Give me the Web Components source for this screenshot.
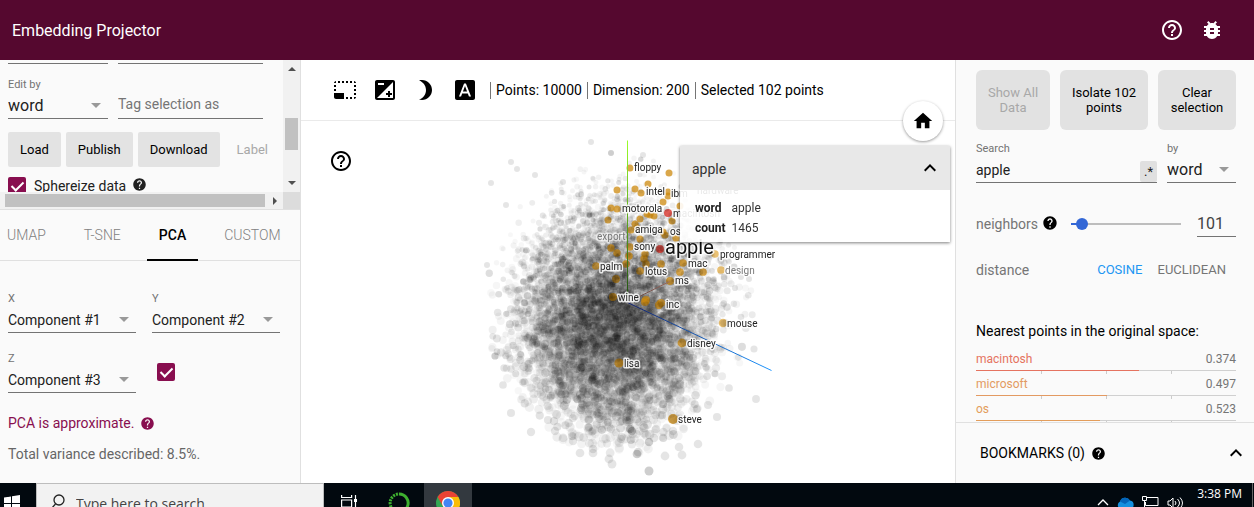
<!DOCTYPE html>
<html lang="en">
<head>
<meta charset="utf-8">
<title>Embedding Projector</title>
<style>
  html, body { margin: 0; height: 100%; }
  body { font-family: Roboto, "Liberation Sans", sans-serif; font-size: 14px; color: #212121; background: #fff; overflow: hidden; }
</style>
</head>
<body>
<embedding-app></embedding-app>
<script>
const define = (name, html, init) => {
  const tpl = document.createElement('template');
  tpl.innerHTML = html;
  customElements.define(name, class extends HTMLElement {
    constructor() {
      super();
      this.attachShadow({ mode: 'open' }).append(tpl.content.cloneNode(true));
    }
    connectedCallback() { if (init) init(this, this.shadowRoot); }
  });
};

const ICONS = {
  'help-outline': 'M11 18h2v-2h-2v2zm1-16C6.48 2 2 6.48 2 12s4.48 10 10 10 10-4.48 10-10S17.52 2 12 2zm0 18c-4.41 0-8-3.59-8-8s3.59-8 8-8 8 3.59 8 8-3.59 8-8 8zm0-14c-2.21 0-4 1.79-4 4h2c0-1.1.9-2 2-2s2 .9 2 2c0 2-3 1.75-3 5h2c0-2.25 3-2.5 3-5 0-2.21-1.79-4-4-4z',
  help: 'M12 2C6.48 2 2 6.48 2 12s4.48 10 10 10 10-4.48 10-10S17.52 2 12 2zm1 17h-2v-2h2v2zm2.07-7.75l-.9.92C13.45 12.9 13 13.5 13 15h-2v-.5c0-1.1.45-2.1 1.17-2.83l1.24-1.26c.37-.36.59-.86.59-1.41 0-1.1-.9-2-2-2s-2 .9-2 2H8c0-2.21 1.79-4 4-4s4 1.79 4 4c0 .88-.36 1.68-.93 2.25z',
  bug: 'M20 8h-2.81c-.45-.78-1.07-1.45-1.82-1.96L17 4.41 15.59 3l-2.17 2.17C12.96 5.06 12.49 5 12 5c-.49 0-.96.06-1.41.17L8.41 3 7 4.41l1.62 1.63C7.88 6.55 7.26 7.22 6.81 8H4v2h2.09c-.05.33-.09.66-.09 1v1H4v2h2v1c0 .34.04.67.09 1H4v2h2.81c1.04 1.79 2.97 3 5.19 3s4.15-1.21 5.19-3H20v-2h-2.09c.05-.33.09-.66.09-1v-1h2v-2h-2v-1c0-.34-.04-.67-.09-1H20V8zm-6 8h-4v-2h4v2zm0-4h-4v-2h4v2z',
  home: 'M10 20v-6h4v6h5v-8h3L12 3 2 12h3v8z',
  less: 'M12 8l-6 6 1.41 1.41L12 10.83l4.59 4.58L18 14z',
  exposure: 'M15 17v2h2v-2h2v-2h-2v-2h-2v2h-2v2h2zm5-15H4c-1.1 0-2 .9-2 2v16c0 1.1.9 2 2 2h16c1.1 0 2-.9 2-2V4c0-1.1-.9-2-2-2zM5 5h6v2H5V5zm15 15H4L20 4v16z',
  night: 'M9 2c-1.05 0-2.05.16-3 .46 4.06 1.27 7 5.06 7 9.54 0 4.48-2.94 8.27-7 9.54.95.3 1.95.46 3 .46 5.52 0 10-4.48 10-10S14.52 2 9 2z',
  labels: 'M9.93 13.5h4.14L12 7.98zM20 2H4c-1.1 0-2 .9-2 2v16c0 1.1.9 2 2 2h16c1.1 0 2-.9 2-2V4c0-1.1-.9-2-2-2zm-4.05 16.5l-1.14-3H9.17l-1.12 3H5.96l5.11-13h1.86l5.11 13h-2.09z',
  select: 'M23 15h-2v2h2v-2zm0-4h-2v2h2v-2zm0 8h-2v2c1 0 2-1 2-2zM15 3h-2v2h2V3zm8 4h-2v2h2V7zm-2-4v2h2c0-1-1-2-2-2zM3 21h8v-6H1v4c0 1.1.9 2 2 2zM3 7H1v2h2V7zm12 12h-2v2h2v-2zm4-16h-2v2h2V3zm0 16h-2v2h2v-2zM3 3C2 3 1 4 1 5h2V3zm0 8H1v2h2v-2zm8-8H9v2h2V3zM7 3H5v2h2V3z'
};

define('ep-icon', `
  <style>
    :host { display: inline-block; flex: none; width: 24px; height: 24px; }
    svg { display: block; width: 100%; height: 100%; fill: currentColor; }
  </style>
  <svg viewBox="0 0 24 24" aria-hidden="true"><path></path></svg>`,
  (el, root) => root.querySelector('path').setAttribute('d', ICONS[el.getAttribute('name')]));

define('ep-header', `
  <style>
    :host { display: flex; align-items: center; justify-content: space-between; height: 60px; padding: 0 30px 0 12px; background: #55082f; color: #fff; box-sizing: border-box; flex: none; }
    h1 { margin: 0; font-size: 16px; font-weight: 400; line-height: 60px; padding-top: 1px; }
    nav { display: flex; gap: 16px; }
    button { all: unset; display: block; height: 24px; }
  </style>
  <h1>Embedding Projector</h1>
  <nav>
    <button aria-label="Help"><ep-icon name="help-outline"></ep-icon></button>
    <button aria-label="Report a bug"><ep-icon name="bug"></ep-icon></button>
  </nav>`);

define('ep-select', `
  <style>
    :host { display: block; }
    label { display: block; font-size: 11px; line-height: 16px; color: #737373; min-height: 16px; }
    div { display: flex; align-items: center; height: 25px; border-bottom: 1px solid #737373; }
    select { appearance: none; flex: 1; min-width: 0; height: 24px; border: 0; padding: 0; margin: 0; background: none; font: inherit; color: #212121; outline: 0; }
    i { border: 5px solid transparent; border-top-color: #999; border-bottom: 0; margin-right: 7px; }
  </style>
  <label for="s"></label>
  <div><select id="s"><option></option></select><i></i></div>`,
  (el, root) => {
    root.querySelector('label').textContent = el.getAttribute('label');
    root.querySelector('option').textContent = el.getAttribute('value');
  });

define('ep-check', `
  <style>
    :host { display: inline-flex; align-items: center; color: #212121; }
    label { display: flex; align-items: center; gap: 8px; line-height: 18px; }
    input { appearance: none; margin: 0; width: 18px; height: 18px; border-radius: 2px; background: #880e4f; display: grid; place-items: start center; }
    input::before { content: ""; width: 5px; height: 10px; margin-top: 2px; border: solid #fff; border-width: 0 2px 2px 0; transform: rotate(45deg); }
  </style>
  <label><input type="checkbox" checked><slot></slot></label>`,
  (el, root) => {
    if (el.hasAttribute('label')) root.querySelector('input').setAttribute('aria-label', el.getAttribute('label'));
  });

define('ep-data-panel', `
  <style>
    :host { display: grid; grid-template: 132px 17px / 1fr 17px; background: #fafafa; border-bottom: 1px solid #e0e0e0; flex: none; }
    .view { overflow: hidden; padding: 3px 0 0 8px; }
    .top, .fields { display: grid; grid-template-columns: 100px 145px; gap: 10px; }
    .top span { border-bottom: 1px solid #737373; }
    .fields { margin-top: 13px; align-items: end; }
    .fields ep-select { font-size: 16px; }
    input { height: 28px; box-sizing: border-box; min-width: 0; border: 0; border-bottom: 1px solid #737373; background: none; font: inherit; padding: 0 0 2px; outline: 0; }
    input::placeholder { color: #757575; opacity: 1; }
    .btns { display: flex; gap: 5px; margin-top: 13px; white-space: nowrap; }
    button { height: 35px; padding: 0 12px; border: 0; border-radius: 2px; background: #e3e3e3; color: #000; font: inherit; font-size: 13px; flex: none; }
    button:disabled { background: none; color: #a8a8a8; }
    .opt { display: flex; align-items: start; gap: 6px; margin-top: 10px; }
    .opt ep-icon { width: 15px; height: 15px; color: #212121; }
    .bar { background: #f1f1f1; display: flex; align-items: center; justify-content: space-between; }
    .v { flex-direction: column; padding: 7px 0; }
    .v b { width: 13px; height: 32px; margin-top: 16px; background: #c1c1c1; }
    .h { padding: 0 6px 0 5px; }
    .h b { flex: 1; height: 13px; background: #c1c1c1; margin-right: 8px; }
    .bar i { border: 4px solid transparent; }
    .up { border-top: 0 !important; border-bottom-color: #505050 !important; }
    .down { border-bottom: 0 !important; border-top-color: #505050 !important; }
    .right { border-right: 0 !important; border-left-color: #505050 !important; }
    .corner { background: #dcdcdc; }
  </style>
  <div class="view">
    <div class="top"><span></span><span></span></div>
    <div class="fields">
      <ep-select label="Edit by" value="word"></ep-select>
      <input aria-label="Tag selection as" placeholder="Tag selection as">
    </div>
    <div class="btns"><button>Load</button><button>Publish</button><button>Download</button><button disabled>Label</button></div>
    <div class="opt"><ep-check>Sphereize data</ep-check><ep-icon name="help"></ep-icon></div>
  </div>
  <div class="bar v"><i class="up"></i><b></b><i class="down"></i></div>
  <div class="bar h"><b></b><i class="right"></i></div>
  <div class="corner"></div>`);

define('ep-projections', `
  <style>
    :host { display: block; flex: 1; min-height: 0; overflow: hidden; }
    nav { display: flex; gap: 38px; height: 50px; padding: 0 7px; border-bottom: 1px solid #e0e0e0; }
    button { border: 0; padding: 0; background: none; font: inherit; font-weight: 300; color: #808080; position: relative; height: 50px; }
    button[aria-selected=true] { font-weight: 500; color: #000; }
    button[aria-selected=true]::after { content: ""; position: absolute; left: -12px; right: -12px; bottom: -1px; height: 2px; background: #000; }
    .axes { display: grid; grid-template-columns: 128px 128px; gap: 18px 16px; padding: 30px 8px 0; }
    .axes ep-check { padding: 0 0 0 5px; align-self: center; }
    p { margin: 0; padding: 0 8px; line-height: 20px; color: #666; }
    .note { display: flex; align-items: center; gap: 6px; margin: 20px 0 11px; color: #880e4f; }
    .note ep-icon { width: 15px; height: 15px; }
  </style>
  <nav role="tablist">
    <button role="tab">UMAP</button><button role="tab">T-SNE</button><button role="tab" aria-selected="true">PCA</button><button role="tab">CUSTOM</button>
  </nav>
  <div class="axes">
    <ep-select label="X" value="Component #1"></ep-select>
    <ep-select label="Y" value="Component #2"></ep-select>
    <ep-select label="Z" value="Component #3"></ep-select>
    <ep-check label="Use Z component"></ep-check>
  </div>
  <p class="note">PCA is approximate. <ep-icon name="help"></ep-icon></p>
  <p>Total variance described: 8.5%.</p>`);

define('ep-toolbar', `
  <style>
    :host { display: flex; align-items: center; height: 60px; padding-left: 32px; border-bottom: 1px solid #eaeaea; color: #000; white-space: nowrap; flex: none; }
    button { all: unset; height: 24px; margin-right: 16px; }
    span { border-left: 1px solid #757575; padding: 0 5px; line-height: 17px; }
    span:first-of-type { margin-left: -3px; }
  </style>
  <button aria-label="Select"><ep-icon name="select"></ep-icon></button>
  <button aria-label="Edit"><ep-icon name="exposure"></ep-icon></button>
  <button aria-label="Night mode"><ep-icon name="night"></ep-icon></button>
  <button aria-label="Labels"><ep-icon name="labels"></ep-icon></button>
  <span>Points: 10000</span><span>Dimension: 200</span><span>Selected 102 points</span>`);

/* Coordinates of the scatter plot have their origin at the middle of the stage. */
const MATCHES = [[2,-134],[41,-129],[20,-118],[7,-113],[13,-109],[-11,-112],[40,-110],[35,-100],[-17,-94],[-11,-93],[-20,-82],[19,-88],[26,-86],[44,-81],[12,-83],[7,-78],[3,-72],[35,-70],[12,-63],[-17,-54],[-11,-49],[2,-55],[1,-46],[17,-48],[16,-43],[18,-38],[33,-38],[-32,-36],[-2,-38],[12,-31],[-12,-23],[87,-48],[55,-39],[52,-30],[75,-30],[42,-21],[93,-32],[-15,-5],[17,0],[33,1],[48,-64],[95,21],[54,41],[-9,61],[45,117],[22,-87],[9,-74],[37,-67],[40,-106],[31,3],[18,-2],[52,-96]];
const NEAREST = [[32,-53],[40,-89]];
const OUTLIERS = [[-37,-160],[-17,-149],[-17,-149],[15,-147],[-117,-140],[-111,-133],[-137,-119],[-93,-127],[-65,-120],[-122,-97],[-141,-37],[-133,54],[-133,54],[-125,83],[-117,111],[-97,130],[-73,129],[-56,134],[-80,118],[-48,151],[-35,151],[-19,157],[-16,162],[21,169],[21,169],[21,140],[21,140],[9,152],[9,152],[54,153],[51,145],[70,142],[45,129],[26,136],[37,154],[89,115],[80,103],[128,97],[101,86],[126,47],[-7,137],[-55,139],[-117,67],[-124,66],[113,15],[121,-23],[113,-25],[107,-14],[-35,147],[28,127],[-17,127],[4,129],[4,129],[10,150]];
const WORDS = [['floppy',6,-132],['intel',18,-108],['ibm',43,-106],['hardware',69,-109],['motorola',-6,-91],['macintosh',45,-86],['amiga',7,-70],['os',42,-68],['sony',6,-53],['mac',60,-36],['lotus',17,-28],['palm',-28,-33],['programmer',92,-45],['ms',47,-19],['wine',-10,-2],['inc',38,5],['mouse',99,24],['disney',59,44],['lisa',-4,64],['steve',50,120]];

define('ep-scatter', `
  <style>
    :host { display: grid; flex: 1; min-height: 0; overflow: hidden; place-content: center; }
    canvas, svg { grid-area: 1 / 1; display: block; }
    text { font-size: 10px; fill: #222; stroke: #fff; stroke-width: 3px; stroke-opacity: .85; stroke-linejoin: round; paint-order: stroke; }
    .dim { fill: #777; stroke-opacity: .6; }
    .big { font-size: 20px; fill: #111; }
  </style>
  <canvas width="654" height="362"></canvas>
  <svg width="654" height="362" viewBox="-327 -182 654 362"></svg>`,
  (el, root) => {
    const ctx = root.querySelector('canvas').getContext('2d');
    ctx.translate(327, 181);
    let seed = 20;
    const rnd = () => {
      seed = (seed + 0x6D2B79F5) | 0;
      let t = Math.imul(seed ^ (seed >>> 15), 1 | seed);
      t = (t + Math.imul(t ^ (t >>> 7), 61 | t)) ^ t;
      return ((t ^ (t >>> 14)) >>> 0) / 4294967296;
    };
    const gauss = () => Math.sqrt(-2 * Math.log(1 - rnd())) * Math.cos(6.2832 * rnd());
    const dot = (x, y, r, fill) => { ctx.fillStyle = fill; ctx.beginPath(); ctx.arc(x, y, r, 0, 7); ctx.fill(); };
    const axis = (x, y, from, to) => {
      const g = ctx.createLinearGradient(0, 0, x, y);
      g.addColorStop(0, from); g.addColorStop(1, to);
      ctx.strokeStyle = g; ctx.lineWidth = 1; ctx.beginPath(); ctx.moveTo(0, 0); ctx.lineTo(x, y); ctx.stroke();
    };
    const size = y => 3.4 + y / 130;
    const cloud = count => {
      while (count > 0) {
        const a = rnd() * 6.2832, d = Math.pow(rnd(), .56), s = 1 + gauss() * .2;
        const x = -13 + Math.cos(a) * d * 99 * s + gauss() * 6;
        const y = 8 + Math.sin(a) * d * 112 * s + gauss() * 6;
        if (Math.hypot((x + 8) / 134, (y - 4) / 150) > 1) continue;
        if (rnd() > 1.3 - d * .75) continue;
        dot(x, y, Math.max(2.5, size(y) + (rnd() - .5)), 'rgba(0,0,0,' + (.03 + rnd() * rnd() * .13) + ')');
        count--;
      }
    };
    cloud(6200);
    for (const [x, y] of OUTLIERS) dot(x, y, Math.max(3, size(y) - .2), 'rgba(0,0,0,.1)');
    for (const [x, y] of MATCHES) dot(x, y, Math.max(3.5, size(y) + .7), x > 80 ? 'rgba(222,160,40,.65)' : 'rgba(205,138,14,.75)');
    for (const [x, y] of NEAREST) dot(x, y, 4, 'rgba(215,50,40,.8)');
    cloud(2200);
    ctx.save(); ctx.translate(-.5, .5);
    axis(0, -162, '#1d4a12', '#9bff2a');
    axis(144, 68, '#14206a', '#1e96ff');
    axis(42, -21, '#5a4440', '#9a6a60');
    ctx.restore();
    const svg = root.querySelector('svg');
    const word = (t, x, y, cls) => {
      const e = document.createElementNS('http://www.w3.org/2000/svg', 'text');
      e.setAttribute('x', x); e.setAttribute('y', y); e.textContent = t;
      if (cls) e.setAttribute('class', cls);
      svg.append(e);
    };
    word('export', -31, -63, 'dim');
    word('design', 97, -29, 'dim');
    for (const w of WORDS) word(...w);
    word('apple', 37, -49, 'big');
  });

define('ep-metadata', `
  <style>
    :host { display: block; background: rgba(255,255,255,.9); box-shadow: 0 1px 3px rgba(0,0,0,.5); }
    header { display: flex; align-items: center; justify-content: space-between; height: 44px; padding: 0 8px 0 12px; background: #e8e8e8; }
    h2 { margin: 0; font-size: 14px; font-weight: 400; line-height: 20px; padding-top: 2px; color: #333; }
    button { all: unset; height: 24px; color: #000; }
    table { border-collapse: collapse; margin: 8px 0 4px 15px; font-size: 12px; line-height: 20px; }
    th, td { padding: 0; text-align: left; color: #333; }
    th { padding-right: 6px; font-weight: 700; color: #212121; }
  </style>
  <header><h2>apple</h2><button aria-label="Collapse"><ep-icon name="less"></ep-icon></button></header>
  <table><tr><th>word</th><td>apple</td></tr><tr><th>count</th><td>1465</td></tr></table>`);

define('ep-stage', `
  <style>
    :host { display: flex; flex-direction: column; flex: 1; min-width: 0; position: relative; background: #fff; }
    .help, .home { all: unset; position: absolute; color: #000; }
    .help { left: 28px; top: 89px; height: 24px; }
    .home { right: 12px; top: 41px; width: 40px; height: 40px; border-radius: 50%; background: #fff; box-shadow: 0 1px 3px rgba(0,0,0,.4); display: grid; place-items: center; }
    .home ep-icon { width: 22px; height: 22px; }
    ep-metadata { position: absolute; right: 5px; top: 86px; width: 270px; }
  </style>
  <ep-toolbar></ep-toolbar>
  <ep-scatter></ep-scatter>
  <button class="help" aria-label="Help"><ep-icon name="help-outline"></ep-icon></button>
  <ep-metadata></ep-metadata>
  <button class="home" aria-label="Reset view"><ep-icon name="home"></ep-icon></button>`);

define('ep-neighbor', `
  <style>
    :host { display: block; height: 25px; }
    a { display: flex; justify-content: space-between; font-size: 12px; line-height: 21px; color: var(--tone); text-decoration: none; }
    a span { color: #757575; }
    .bar { height: 1px; background: linear-gradient(90deg, var(--tone) var(--fill), #d0d0d0 0); }
    .ticks { display: grid; grid-template-columns: repeat(4, 1fr); height: 3px; }
    .ticks i + i { border-left: 1px solid #ccc; }
  </style>
  <a href="#"><slot></slot><span></span></a>
  <div class="bar"></div>
  <div class="ticks"><i></i><i></i><i></i><i></i></div>`,
  (el, root) => {
    const v = +el.getAttribute('distance');
    root.querySelector('span').textContent = v.toFixed(3);
    el.style.setProperty('--fill', (1 - v) * 100 + '%');
    el.style.setProperty('--tone', el.getAttribute('tone'));
  });

define('ep-inspector', `
  <style>
    :host { display: flex; flex-direction: column; background: #fafafa; border-left: 1px solid #e0e0e0; box-sizing: border-box; }
    .scroll { flex: 1; min-height: 0; overflow: hidden; padding: 10px 18px 0 20px; }
    button { font: inherit; border: 0; padding: 0; background: none; }
    .actions { display: grid; grid-template-columns: 74px 88px 1fr; gap: 10px; }
    .actions button { height: 60px; border-radius: 6px; background: #e2e2e2; color: #000; font-size: 13px; line-height: 15px; padding: 0 8px; }
    .actions button:disabled { color: #a8a8a8; }
    .search { display: grid; grid-template-columns: minmax(0, 1fr) 69px; gap: 10px; margin-top: 11px; }
    .search label { display: block; font-size: 11px; line-height: 16px; color: #737373; }
    .box { display: flex; height: 25px; align-items: end; border-bottom: 1px solid #737373; }
    .box input { flex: 1; min-width: 0; height: 25px; border: 0; padding: 0; background: none; font: inherit; color: #212121; outline: 0; }
    .box button { width: 17px; height: 21px; border-radius: 2px; background: #e0e0e0; color: #212121; font-size: 13px; }
    ep-select { font-size: 16px; }
    .near { display: flex; align-items: center; margin-top: 28px; color: #757575; }
    .near ep-icon { width: 16px; height: 16px; margin: 0 13px 3px 4px; color: #000; }
    input[type=range] { appearance: none; margin: 0 16px 0 0; flex: 1; min-width: 0; height: 12px; background: linear-gradient(90deg, #3367d6 8%, #bdbdbd 0) center / 100% 2px no-repeat; }
    input[type=range]::-webkit-slider-thumb { appearance: none; width: 12px; height: 12px; border-radius: 50%; background: #3367d6; }
    .num { width: 39px; height: 26px; box-sizing: border-box; border: 0; border-bottom: 1px solid #737373; padding: 0; font: inherit; font-size: 16px; color: #424242; background: none; }
    .dist { display: flex; align-items: center; margin-top: 23px; line-height: 20px; color: #757575; }
    .dist span { flex: 1; }
    .dist button { font-size: 13px; color: #757575; margin-right: 10px; }
    .dist .on { color: #2196f3; margin-right: 15px; }
    h2 { margin: 41px 0 8px; font-size: 14px; font-weight: 400; line-height: 20px; color: #000; }
    footer { display: flex; align-items: center; height: 60px; padding: 0 6px 0 24px; border-top: 1px solid #e0e0e0; color: #000; }
    footer ep-icon { width: 15px; height: 15px; margin-left: 6px; }
    footer button { margin-left: auto; height: 24px; }
    footer button ep-icon { width: 24px; height: 24px; margin: 0; }
  </style>
  <div class="scroll">
    <div class="actions"><button disabled>Show All Data</button><button>Isolate 102 points</button><button>Clear selection</button></div>
    <div class="search">
      <div><label for="q">Search</label><div class="box"><input id="q" value="apple"><button aria-label="Regex mode">.*</button></div></div>
      <ep-select label="by" value="word"></ep-select>
    </div>
    <div class="near">
      <label for="n">neighbors</label><ep-icon name="help"></ep-icon>
      <input type="range" id="n" min="5" max="999" value="60"><input class="num" aria-label="Neighbor count" value="101">
    </div>
    <div class="dist"><span>distance</span><button class="on">COSINE</button><button>EUCLIDEAN</button></div>
    <h2>Nearest points in the original space:</h2>
    <ep-neighbor distance="0.374" tone="#e57360">macintosh</ep-neighbor>
    <ep-neighbor distance="0.497" tone="#e39a62">microsoft</ep-neighbor>
    <ep-neighbor distance="0.523" tone="#e39d5b">os</ep-neighbor>
  </div>
  <footer>BOOKMARKS (0)<ep-icon name="help"></ep-icon><button aria-label="Expand bookmarks"><ep-icon name="less"></ep-icon></button></footer>`);

define('os-taskbar', `
  <style>
    :host { display: flex; height: 24px; flex: none; overflow: hidden; background: #02090f; color: #fff; align-items: start; }
    button { all: unset; display: grid; place-items: center; height: 40px; width: 50px; }
    .start { width: 36px; }
    .start svg { margin-right: 12px; }
    label { display: flex; align-items: center; gap: 10px; width: 288px; height: 40px; box-sizing: border-box; padding-left: 13px; background: #f2f2f2; border: 1px solid #bdbdbd; color: #222; }
    input { border: 0; padding: 0; background: none; font: 14px "Open Sans", "Noto Sans", sans-serif; min-width: 0; flex: 1; }
    input::placeholder { color: #444; opacity: 1; }
    .chrome { background: #33393f; width: 48px; }
    .tray { margin-left: auto; display: flex; align-items: center; height: 40px; gap: 8px; }
    time { font: 12px/20px "Open Sans", "Noto Sans", sans-serif; align-self: start; padding: 1px 10px 0 5px; height: 40px; border-right: 1px solid #666; margin-right: 1px; }
    svg { display: block; }
  </style>
  <button class="start" aria-label="Start"><svg width="18" height="17" viewBox="0 0 18 17" fill="#fff"><path d="M1 2.5 8 1.5V8H1zM9 1.3 17 0V8H9zM1 9h7v6.5l-7-1zM9 9h8v8l-8-1.3z"/></svg></button>
  <label><svg width="16" height="20" viewBox="0 0 16 20" fill="none" stroke="#222" stroke-width="1.3"><circle cx="9" cy="7" r="5"/><path d="M5.5 11 1 16"/></svg><input aria-label="Search Windows" placeholder="Type here to search"></label>
  <button aria-label="Task view"><svg width="18" height="18" viewBox="0 0 18 18" fill="none" stroke="#fff" stroke-width="1.2"><path d="M1.600 1v2.500h10V1M1.600 6h10v7h-10zM1.600 18v-2h10v2M15.500 1v17"/><path d="M14 5h3v3h-3z" fill="#fff" stroke="none"/></svg></button>
  <button aria-label="Anaconda"><svg width="22" height="22" viewBox="0 0 22 22" fill="none" stroke="#3eb02f" stroke-width="3"><path d="M11 2a9 9 0 1 1-6 15.600"/><path d="M5 17.600A9 9 0 0 1 11 2" stroke-dasharray="2 1"/></svg></button>
  <button class="chrome" aria-label="Chrome"><svg width="24" height="24" viewBox="0 0 24 24"><circle cx="12" cy="12" r="12" fill="#34a853"/><path d="M12 12 1.600 6A12 12 0 0 1 22.400 6z" fill="#ea4335"/><path d="M12 6h10.400A12 12 0 0 1 12 24l5.200-9z" fill="#fbbc05"/><path d="M1.600 6 6.800 15 12 6z" fill="#ea4335"/><circle cx="12" cy="12" r="6" fill="#fff"/><circle cx="12" cy="12" r="4.600" fill="#4285f4"/></svg></button>
  <div class="tray">
    <svg width="12" height="12" viewBox="0 0 12 12" fill="none" stroke="#fff" stroke-width="1.300"><path d="m1 8 5-5 5 5"/></svg>
    <svg width="17" height="12" viewBox="0 0 17 12"><path d="M4 12a4 4 0 0 1-1-7.500 5.500 5.500 0 0 1 10-1A4.300 4.300 0 0 1 13 12z" fill="#1490df"/><path d="M3 4.500a5.500 5.500 0 0 1 10-1L8 7z" fill="#0364b8"/></svg>
    <svg width="17" height="14" viewBox="0 0 17 14" fill="none" stroke="#fff"><path d="M5 1.500h11v8H3.500V6M8 12.500h6M.5.500h4v4h-4zM2.500 4.500v8"/></svg>
    <svg width="17" height="14" viewBox="0 0 17 14" fill="none" stroke="#fff"><path d="M1 5h2l3-3v10L3 9H1zM8 5q2 2 0 4M10.500 3q4 4 0 8M13 1.500q5 5.500 0 11"/></svg>
    <time>3:38 PM</time>
  </div>`);

define('embedding-app', `
  <style>
    :host { display: flex; flex-direction: column; height: 100%; }
    main { display: flex; flex: 1; min-height: 0; }
    aside { display: flex; flex-direction: column; width: 301px; box-sizing: border-box; border-right: 1px solid #e0e0e0; background: #fafafa; flex: none; }
    ep-inspector { width: 299px; flex: none; }
  </style>
  <ep-header></ep-header>
  <main>
    <aside><ep-data-panel></ep-data-panel><ep-projections></ep-projections></aside>
    <ep-stage></ep-stage>
    <ep-inspector></ep-inspector>
  </main>
  <os-taskbar></os-taskbar>`);
</script>
</body>
</html>
